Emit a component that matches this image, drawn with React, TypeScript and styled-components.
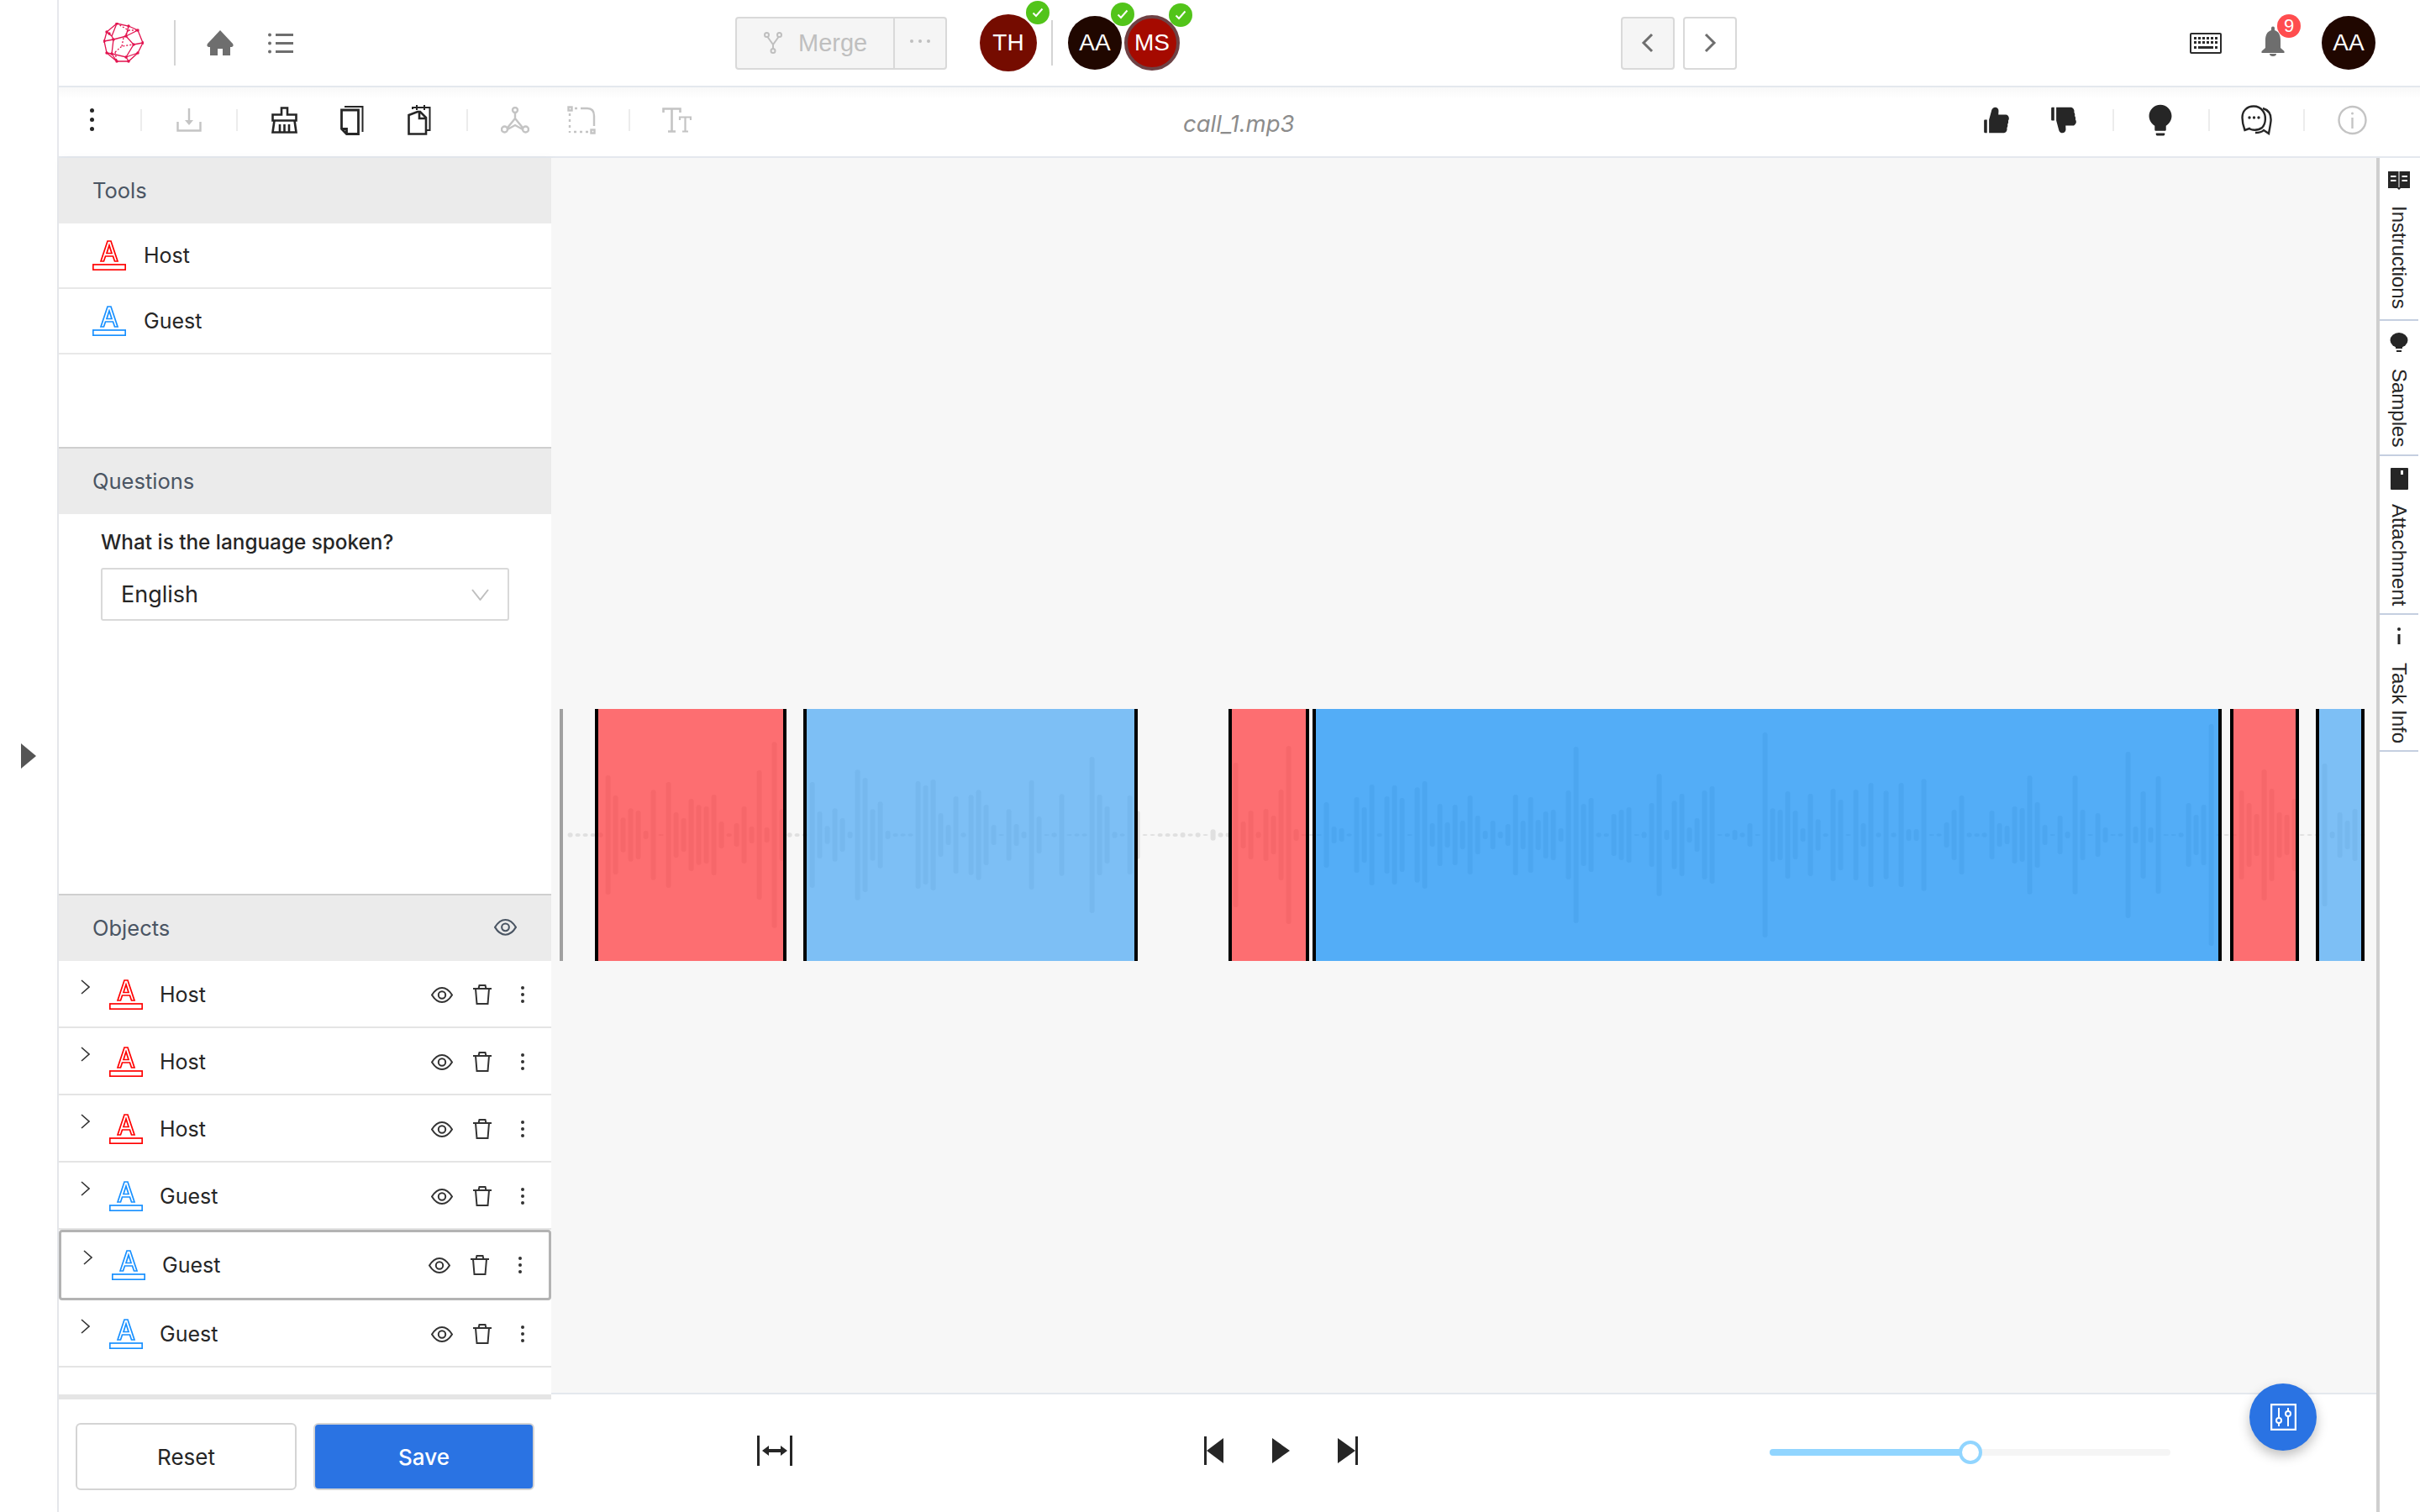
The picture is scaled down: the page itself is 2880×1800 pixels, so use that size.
import React from "react";
import styled, { createGlobalStyle } from "styled-components";
import { AiFillBulb, AiFillDislike, AiFillLike } from "react-icons/ai";

const GlobalStyle = createGlobalStyle`
  html, body { margin: 0; padding: 0; background: #fff; }
  body { font-family: "Inter", "Liberation Sans", sans-serif; color: #262626; }
  * { box-sizing: border-box; }
`;

const Page = styled.div`
  display: flex;
  width: 2880px;
  height: 1800px;
  overflow: hidden;
`;
const Rail = styled.div`
  width: 70px;
  flex: none;
  display: flex;
  align-items: center;
  padding: 0 0 0 25px;
  border-right: 2px solid #e6e8ec;
`;
const RailArrow = styled.div`
  width: 0;
  height: 0;
  border-left: 18px solid #555;
  border-top: 15px solid transparent;
  border-bottom: 15px solid transparent;
`;
const Main = styled.div`
  flex: 1;
  display: flex;
  flex-direction: column;
  min-width: 0;
`;
const TopBar = styled.header`
  height: 104px;
  flex: none;
  display: flex;
  align-items: center;
  padding-left: 53px;
  border-bottom: 2px solid #e4e8ee;
`;
const ToolBar = styled.div`
  height: 84px;
  flex: none;
  display: flex;
  align-items: center;
  padding: 0 0 5px 36px;
  border-bottom: 2px solid #e4e8ee;
  background: linear-gradient(#f8f8f8, #fff 14px);
`;
const Slot = styled.div<{ $ml?: number }>`
  flex: none;
  display: flex;
  align-items: center;
  justify-content: center;
  margin-left: ${p => p.$ml ?? 0}px;
`;
const BarRule = styled.div<{ $ml: number }>`
  width: 2px;
  height: 54px;
  flex: none;
  background: #d4d4d4;
  margin-left: ${p => p.$ml}px;
`;
const ToolRule = styled.div<{ $ml: number }>`
  width: 2px;
  height: 26px;
  flex: none;
  background: #ececec;
  margin-left: ${p => p.$ml}px;
`;
const MergeGroup = styled.div`
  width: 252px;
  height: 63px;
  flex: none;
  margin-left: 526px;
  display: flex;
  background: #f5f5f5;
  border: 2px solid #d9d9d9;
  border-radius: 4px;
  color: #bfbfbf;
`;
const MergeMain = styled.div`
  width: 188px;
  display: flex;
  align-items: center;
  gap: 19px;
  padding-left: 32px;
  font-size: 29px;
  font-family: "Liberation Sans", sans-serif;
  border-right: 2px solid #d9d9d9;
`;
const MergeMore = styled.div`
  flex: 1;
  display: flex;
  align-items: center;
  justify-content: center;
  padding-bottom: 4px;
  gap: 6px;
`;
const Dot = styled.i`
  width: 4px;
  height: 4px;
  border-radius: 50%;
  background: #bfbfbf;
`;
const Avatar = styled.div<{ $bg: string; $size: number; $ml: number; $ring?: boolean }>`
  position: relative;
  width: ${p => p.$size}px;
  height: ${p => p.$size}px;
  flex: none;
  margin-left: ${p => p.$ml}px;
  border-radius: 50%;
  background: ${p => p.$bg};
  border: ${p => (p.$ring ? "4px solid #6e4245" : "none")};
  color: #fff;
  font-size: 28px;
  font-family: "Liberation Sans", sans-serif;
  display: flex;
  align-items: center;
  justify-content: center;
`;
const Check = styled.span<{ $ring?: boolean }>`
  position: absolute;
  top: ${p => (p.$ring ? -18 : -16)}px;
  right: ${p => (p.$ring ? -19 : -15)}px;
  width: 28px;
  height: 28px;
  border-radius: 50%;
  background: #52c41a;
  display: flex;
  align-items: center;
  justify-content: center;
`;
const NavButton = styled.button<{ $off?: boolean; $ml: number }>`
  width: 64px;
  height: 63px;
  flex: none;
  padding: 0;
  margin-left: ${p => p.$ml}px;
  background: ${p => (p.$off ? "#f5f5f5" : "#fff")};
  border: 2px solid #d9d9d9;
  border-radius: 4px;
  display: flex;
  align-items: center;
  justify-content: center;
`;
const Count = styled.span`
  position: absolute;
  top: -14px;
  right: -19px;
  width: 28px;
  height: 28px;
  border-radius: 50%;
  background: #ff4d4f;
  color: #fff;
  font-size: 22px;
  font-family: "Liberation Sans", sans-serif;
  display: flex;
  align-items: center;
  justify-content: center;
`;
const BellBox = styled.div`
  position: relative;
  width: 28px;
  height: 36px;
  flex: none;
  margin-left: 47px;
  margin-top: -4px;
  display: flex;
`;
const FileName = styled.div`
  margin-left: 585px;
  width: 160px;
  flex: none;
  font-size: 27.5px;
  font-style: italic;
  color: #8c8c8c;
  padding-top: 9px;
`;
const RightTools = styled.div`
  margin-left: auto;
  padding-right: 63px;
  display: flex;
  align-items: center;
`;
const Body = styled.div`
  flex: 1;
  display: flex;
  min-height: 0;
`;
const Panel = styled.aside`
  width: 586px;
  flex: none;
  display: flex;
  flex-direction: column;
  background: #fff;
  box-shadow: 2px 0 10px rgba(0, 0, 0, 0.03);
  position: relative;
`;
const Section = styled.section<{ $h: number; $rule?: boolean }>`
  height: ${p => p.$h}px;
  flex: none;
  border-top: ${p => (p.$rule ? "2px solid #cfcfcf" : "none")};
`;
const SectionHead = styled.div<{ $h: number }>`
  height: ${p => p.$h}px;
  padding: 0 41px 2px 40px;
  background: #ebebeb;
  display: flex;
  align-items: center;
  justify-content: space-between;
  font-size: 25.5px;
  color: #4a5563;
`;
const ToolRow = styled.div`
  height: 78px;
  display: flex;
  align-items: center;
  gap: 21px;
  padding-left: 40px;
  font-size: 25px;
  border-bottom: 2px solid #e8e8e8;
`;
const Question = styled.div`
  padding: 19px 50px 0 50px;
`;
const QuestionLabel = styled.div`
  font-size: 24.3px;
  font-weight: 500;
  line-height: 28px;
`;
const Select = styled.div`
  height: 63px;
  margin-top: 17px;
  padding: 0 22px 0 22px;
  border: 2px solid #d9d9d9;
  border-radius: 3px;
  display: flex;
  align-items: center;
  justify-content: space-between;
  font-size: 27px;
`;
const ObjectRow = styled.div<{ $active?: boolean }>`
  height: ${p => (p.$active ? 84 : 80)}px;
  display: flex;
  align-items: center;
  padding: ${p => (p.$active ? 0 : 2)}px 31px 0 26px;
  font-size: 25px;
  border: ${p => (p.$active ? "3px solid #b3b3b3" : "none")};
  border-bottom: ${p => (p.$active ? "3px solid #b3b3b3" : "2px solid #e4e4e4")};
  border-radius: ${p => (p.$active ? 4 : 0)}px;
  background: #fff;
`;
const RowCaret = styled.div`
  width: 11px;
  flex: none;
  display: flex;
  margin-bottom: 18px;
`;
const RowName = styled.span`
  margin-left: 20px;
`;
const RowActions = styled.div`
  margin-left: auto;
  display: flex;
  align-items: center;
`;
const Kebab = styled.div<{ $ml?: number; $color?: string }>`
  width: 6px;
  flex: none;
  margin-left: ${p => p.$ml ?? 0}px;
  display: flex;
  flex-direction: column;
  align-items: center;
  gap: ${p => (p.$color ? 6 : 4)}px;
  i {
    width: ${p => (p.$color ? 5 : 4)}px;
    height: ${p => (p.$color ? 5 : 4)}px;
    border-radius: 50%;
    background: ${p => p.$color ?? "#333"};
  }
`;
const Footer = styled.div`
  flex: 1;
  display: flex;
  gap: 20px;
  padding: 28px 20px 0;
  border-top: 6px solid #e5e5e5;
  margin-top: auto;
`;
const FooterButton = styled.button<{ $primary?: boolean }>`
  width: 263px;
  height: 80px;
  border-radius: 6px;
  border: 2px solid #d4d4d4;
  background: ${p => (p.$primary ? "#2a73e3" : "#fff")};
  color: ${p => (p.$primary ? "#fff" : "#262626")};
  font: ${p => (p.$primary ? 500 : 400)} 26px "Inter", sans-serif;
`;
const Stage = styled.main`
  flex: 1;
  display: flex;
  flex-direction: column;
  position: relative;
  min-width: 0;
`;
const Canvas = styled.div`
  flex: 1;
  background: #f7f7f7;
  padding-top: 656px;
`;
const Track = styled.div`
  position: relative;
  height: 300px;
`;
const Wave = styled.svg`
  position: absolute;
  inset: 0;
`;
const Cursor = styled.div`
  position: absolute;
  left: 10px;
  top: 0;
  width: 4px;
  height: 100%;
  background: #a0a0a0;
`;
const Segment = styled.div<{ $tint: string }>`
  position: absolute;
  top: 0;
  height: 100%;
  background: ${p => p.$tint};
  background-clip: padding-box;
  border-left: 4px solid #000;
  border-right: 4px solid #000;
`;
const Transport = styled.div`
  height: 142px;
  flex: none;
  display: flex;
  align-items: center;
  background: #fff;
  border-top: 2px solid #e4e8ee;
  padding: 0 0 6px 245px;
`;
const Slider = styled.div`
  position: relative;
  width: 477px;
  height: 8px;
  flex: none;
  margin-left: 490px;
  margin-top: 4px;
  border-radius: 4px;
  background: #f5f5f5;
`;
const SliderFill = styled.div`
  height: 100%;
  border-radius: 4px;
  background: #91d5ff;
`;
const SliderThumb = styled.div`
  position: absolute;
  top: -10px;
  width: 28px;
  height: 28px;
  margin-left: -14px;
  border-radius: 50%;
  background: #fff;
  border: 4px solid #91d5ff;
`;
const Fab = styled.button`
  position: absolute;
  right: 71px;
  bottom: 73px;
  width: 80px;
  height: 80px;
  padding: 0;
  border: none;
  border-radius: 50%;
  background: #2a73e3;
  box-shadow: 0 6px 14px rgba(0, 0, 0, 0.25);
  display: flex;
  align-items: center;
  justify-content: center;
`;
const SideTabs = styled.nav`
  width: 52px;
  flex: none;
  padding-right: 2px;
  border-left: 4px solid #cfcfcf;
  background: #fff;
`;
const SideTab = styled.div<{ $h: number; $pad: number }>`
  height: ${p => p.$h}px;
  padding-top: ${p => p.$pad}px;
  display: flex;
  flex-direction: column;
  align-items: center;
  border-bottom: 2px solid #c5cfe0;
`;
const SideLabel = styled.span<{ $mt: number }>`
  writing-mode: vertical-rl;
  margin-top: ${p => p.$mt}px;
  font: 24px "Liberation Sans", sans-serif;
  line-height: 24px;
`;

// half heights of the audio bars, 9px apart, in thirds of a pixel
const BARS = [
  8, 6, 6, 6, 8, 213, 141, 62, 95, 87, 15, 161, 2, 189, 81, 60, 129, 107, 102, 144, 48, 6, 42, 102, 30, 231, 27, 332,
  92, 8, 6, 6, 189, 84, 32, 95, 60, 12, 233, 204, 92, 119, 15, 6, 5, 5, 192, 177, 198, 78, 36, 138, 8, 143, 161, 108,
  36, 2, 92, 39, 12, 195, 66, 2, 8, 146, 2, 5, 5, 279, 144, 102, 11, 5, 141, 86, 2, 2, 6, 6, 6, 9, 5, 8, 2, 20, 8, 8,
  258, 48, 87, 11, 93, 69, 162, 318, 21, 2, 2, 2, 117, 30, 24, 5, 135, 99, 180, 6, 138, 177, 132, 2, 170, 192, 42, 111,
  45, 108, 51, 141, 69, 15, 51, 12, 39, 144, 51, 135, 54, 84, 90, 24, 159, 315, 111, 132, 8, 6, 75, 90, 99, 2, 11, 114,
  218, 18, 122, 147, 27, 60, 159, 174, 2, 6, 18, 8, 42, 2, 366, 95, 90, 156, 87, 24, 147, 56, 6, 165, 126, 2, 162, 42,
  186, 8, 158, 8, 186, 21, 21, 200, 2, 5, 45, 90, 141, 8, 6, 8, 87, 42, 33, 102, 96, 212, 117, 36, 2, 69, 12, 212, 90,
  2, 78, 27, 2, 5, 297, 30, 156, 27, 210, 2, 2, 8, 114, 72, 108, 396, 2, 2, 2, 159, 114, 75, 234, 165, 81, 72, 129, 2,
  2, 2, 255, 12, 81, 51, 93, 2,
];

const RED = "rgba(255, 51, 56, 0.7)";
const SKY = "rgba(73, 167, 244, 0.7)";
const BLUE = "rgba(13, 141, 246, 0.7)";

const SEGMENTS = [
  { left: 52, width: 228, tint: RED },
  { left: 300, width: 398, tint: SKY },
  { left: 806, width: 96, tint: RED },
  { left: 906, width: 1082, tint: BLUE },
  { left: 1998, width: 82, tint: RED },
  { left: 2100, width: 58, tint: SKY },
];

const OBJECTS = [
  { name: "Host", color: "#ff0000" },
  { name: "Host", color: "#ff0000" },
  { name: "Host", color: "#ff0000" },
  { name: "Guest", color: "#1890ff" },
  { name: "Guest", color: "#1890ff", active: true },
  { name: "Guest", color: "#1890ff" },
];

const Logo = () => {
  const outer = "16,1 30,4 41,9 47,24 41,36 30,46 16,46 4,36 1,22 4,11";
  const inner = [[12, 20], [27, 16], [36, 26], [27, 41], [10, 37]];
  const nodes = [
    [16, 1], [30, 4], [41, 9], [47, 24], [41, 36], [30, 46], [16, 46], [4, 36], [1, 22], [4, 11],
    [12, 20], [27, 16], [36, 26], [27, 41], [10, 37], [7, 13],
  ];
  return (
    <svg width="48" height="48" viewBox="0 0 48 48" fill="none" stroke="#e2134f" strokeWidth="1.3">
      <polygon points={outer} />
      <polygon points={inner.map(p => p.join(",")).join(" ")} />
      <path d="M4 11 L10 16 L12 20 M10 16 L16 1 M27 16 L30 4 M27 16 L41 9 M36 26 L47 24 M27 41 L30 46 M27 41 L41 36 M10 37 L16 46 M10 37 L4 36 M12 20 L1 22" />
      <path d="M16 1 L30 9 L41 9 M30 9 L24 18 M14 35 L22 28 L36 26 M22 28 L24 18 M14 35 L16 46" strokeDasharray="2 2" />
      {nodes.map(([x, y], i) => (
        <circle key={i} cx={x} cy={y} r="1.7" fill="#e2134f" stroke="none" />
      ))}
    </svg>
  );
};

const HomeIcon = () => (
  <svg width="32" height="30" viewBox="0 0 32 30" fill="#6e6e6e">
    <path d="M16 0 L31 16 Q33 20 28 20 V30 H19 V22 H13 V30 H4 V20 Q-1 20 1 16z" />
  </svg>
);

const BellIcon = () => (
  <svg width="28" height="36" viewBox="0 0 28 36" fill="#6e6e6e">
    <path d="M12 2.5 a2 2 0 0 1 4 0 V5 C21 6.5 23 11 23 17 V26 L27.5 30 V32 H0.5 V30 L5 26 V17 C5 11 7 6.5 12 5z" />
    <path d="M10 33 H18 A4 3 0 0 1 10 33z" />
  </svg>
);

const ListIcon = () => (
  <svg width="30" height="25" viewBox="0 0 30 25" fill="#6e6e6e">
    <circle cx="2" cy="2.5" r="2" />
    <circle cx="2" cy="12.5" r="2" />
    <circle cx="2" cy="22.5" r="2" />
    <rect x="9" y="1" width="21" height="3" />
    <rect x="9" y="11" width="21" height="3" />
    <rect x="9" y="21" width="21" height="3" />
  </svg>
);

const MergeIcon = () => (
  <svg width="22" height="26" viewBox="0 0 22 26" fill="none" stroke="#bfbfbf" strokeWidth="2">
    <circle cx="3.5" cy="3.5" r="2.5" />
    <circle cx="18.5" cy="3.5" r="2.5" />
    <circle cx="11" cy="22.5" r="2.5" />
    <path d="M4.5 6 L11 15 L17.5 6 M11 15 V20" />
  </svg>
);

const CheckMark = () => (
  <svg width="14" height="12" viewBox="0 0 14 12" fill="none" stroke="#fff" strokeWidth="2">
    <path d="M1.5 6.5 L5 10 L12.5 1.5" />
  </svg>
);

const Chevron = ({ dir }: { dir: "left" | "right" }) => (
  <svg width="16" height="24" viewBox="0 0 16 24" fill="none" stroke="#6e6e6e" strokeWidth="3">
    <path d={dir === "left" ? "M13 2 L3 12 L13 22" : "M3 2 L13 12 L3 22"} />
  </svg>
);

const KeyboardIcon = () => (
  <svg width="38" height="25" viewBox="0 0 38 25">
    <rect width="38" height="25" rx="2" fill="#2b2b2b" />
    <rect x="2" y="2" width="34" height="21" fill="#fff" />
    <path
      d="M5 5h3v3H5zM10 5h3v3h-3zM15 5h3v3h-3zM20 5h3v3h-3zM25 5h3v3h-3zM30 5h3v3h-3zM5 10h3v3H5zM10 10h3v3h-3zM15 10h3v3h-3zM20 10h3v3h-3zM25 10h3v3h-3zM30 10h3v3h-3zM5 16h3v3H5zM10 16h18v3H10zM30 16h3v3h-3z"
      fill="#2b2b2b"
    />
  </svg>
);

const DownloadIcon = () => (
  <svg width="30" height="28" viewBox="0 0 30 28" fill="none" stroke="#c4c4c4" strokeWidth="2.4">
    <path d="M15 0 V17 M1.5 16 V26.5 H28.5 V16" />
    <path d="M10 14 H20 L15 20z" fill="#c4c4c4" stroke="none" />
  </svg>
);

const BrushIcon = () => (
  <svg width="31" height="32" viewBox="0 0 31 32" fill="none" stroke="#262626" strokeWidth="2.6">
    <path d="M12 1.5 H19 V9.5 H29.5 V16.5 H1.5 V9.5 H12z" />
    <path d="M3.5 16.5 L1.5 30.5 H29.5 L27.5 16.5 M10 21 V30 M15.5 21 V30 M21 21 V30" />
  </svg>
);

const CopyIcon = () => (
  <svg width="28" height="36" viewBox="0 0 28 36" fill="none" stroke="#262626" strokeWidth="2.8">
    <path d="M5 2 H26.5 V32" strokeWidth="2" />
    <path d="M1.5 6 H21.5 V34.5 H7.5 L1.5 28.5z M1.5 28.5 H7.5 V34.5" />
  </svg>
);

const PasteIcon = () => (
  <svg width="28" height="36" viewBox="0 0 28 36" fill="none" stroke="#262626" strokeWidth="2.6">
    <path d="M6 5 V3 H26.5 V30 H23 M11 0 V6 M20 0 V6" strokeWidth="2" />
    <path d="M1.5 12 L12 8 H15 L22 15 V34.5 H1.5z M14 8 V16 H22" />
  </svg>
);

const NodesIcon = () => (
  <svg width="34" height="32" viewBox="0 0 34 32" fill="none" stroke="#c4c4c4" strokeWidth="2.4">
    <circle cx="17" cy="4" r="3" />
    <circle cx="4.5" cy="27" r="3.5" />
    <circle cx="29.5" cy="27" r="3.5" />
    <path d="M17 7 V14 M17 14 L8 25 M17 14 L26 25 M8 27 L17 22 L26 27" />
  </svg>
);

const ShapeIcon = () => (
  <svg width="34" height="34" viewBox="0 0 34 34" fill="none" stroke="#c4c4c4" strokeWidth="2.4">
    <rect x="1.5" y="1.5" width="4" height="4" />
    <rect x="28.5" y="28.5" width="4" height="4" />
    <path d="M9 3 H12 M16 3 H24 Q32 3 32 12 V24 M3 9 V12 M3 16 V19 M3 23 V26 M3 30 V32 M8 31 H11 M15 31 H18 M22 31 H25" />
  </svg>
);

const TextSizeIcon = () => (
  <svg width="35" height="30" viewBox="0 0 35 30" fill="none" stroke="#c4c4c4" strokeWidth="2.6">
    <path d="M1.5 6 V1.5 H21.5 V6 M11.5 1.5 V28.5 M7 28.5 H16" />
    <path d="M21 15 V11.5 H34 V15 M27.5 11.5 V28.5 M24 28.5 H31" strokeWidth="2.2" />
  </svg>
);

const ChatIcon = () => (
  <svg width="37" height="36" viewBox="0 0 37 36" fill="none" stroke="#262626" strokeWidth="2.4">
    <path d="M26 4 C33 6 36 12 35.5 19 C35 24 34 28 33 34 L27 30 C24 33 20 33 17 33" />
    <path d="M15 1.5 C7 1.5 1.5 7 1.5 15 C1.5 21 3 26 4.5 30 L10 28 C12 30 20 31 25 27 C30 22 30 12 26 7 C23 3 19 1.5 15 1.5z" />
    <circle cx="10" cy="15" r="1.7" fill="#262626" stroke="none" />
    <circle cx="15.5" cy="15" r="1.7" fill="#262626" stroke="none" />
    <circle cx="21" cy="15" r="1.7" fill="#262626" stroke="none" />
  </svg>
);

const InfoIcon = () => (
  <svg width="35" height="36" viewBox="0 0 35 36" fill="none" stroke="#c4c4c4" strokeWidth="2.4">
    <circle cx="17.5" cy="18" r="16" />
    <path d="M17.5 15 V28" />
    <circle cx="17.5" cy="10" r="1.5" fill="#c4c4c4" stroke="none" />
  </svg>
);

const LabelIcon = ({ color }: { color: string }) => (
  <svg width="40" height="36" viewBox="0 0 40 36" fill="none" stroke={color} strokeWidth="1.7">
    <path d="M10 25 L18 1 H22 L30 25 H26.5 L24.5 19 H15.5 L13.5 25z" />
    <path d="M17 15.5 H23 L20 6z" />
    <rect x="0.8" y="29" width="38.4" height="6.2" />
  </svg>
);

const RowCaretIcon = () => (
  <svg width="11" height="18" viewBox="0 0 11 18" fill="none" stroke="#333" strokeWidth="1.6">
    <path d="M1 1 L10 9 L1 17" />
  </svg>
);

const EyeIcon = ({ color = "#333", w = 26 }: { color?: string; w?: number }) => (
  <svg width={w} height={(w * 19) / 26} viewBox="0 0 26 19" fill="none" stroke={color} strokeWidth="2">
    <path d="M1 9.5 C5 3 9 1 13 1 C17 1 21 3 25 9.5 C21 16 17 18 13 18 C9 18 5 16 1 9.5z" />
    <circle cx="13" cy="9.5" r="4.2" />
  </svg>
);

const TrashIcon = () => (
  <svg width="22" height="24" viewBox="0 0 22 24" fill="none" stroke="#333" strokeWidth="2">
    <path d="M0 5 H22 M3 5 L4.5 23 H17.5 L19 5 M6.5 5 L7.5 1 H14.5 L15.5 5" />
  </svg>
);

const SelectCaret = () => (
  <svg width="21" height="14" viewBox="0 0 21 14" fill="none" stroke="#bfbfbf" strokeWidth="2">
    <path d="M1 1 L10.5 13 L20 1" />
  </svg>
);

const FitIcon = () => (
  <svg width="42" height="36" viewBox="0 0 42 36" fill="#262626">
    <rect x="0" y="0" width="3" height="36" />
    <rect x="39" y="0" width="3" height="36" />
    <path d="M6 18 L14 12 V16 H28 V12 L36 18 L28 24 V20 H14 V24z" />
  </svg>
);

const PrevIcon = () => (
  <svg width="23" height="34" viewBox="0 0 23 34" fill="#262626">
    <rect width="3" height="34" />
    <path d="M23 2 V32 L3 17z" />
  </svg>
);

const PlayIcon = () => (
  <svg width="21" height="30" viewBox="0 0 21 30" fill="#262626">
    <path d="M0 0 L21 15 L0 30z" />
  </svg>
);

const NextIcon = () => (
  <svg width="24" height="34" viewBox="0 0 24 34" fill="#262626">
    <rect x="21" width="3" height="34" />
    <path d="M0 2 V32 L21 17z" />
  </svg>
);

const MixerIcon = () => (
  <svg width="31" height="32" viewBox="0 0 31 32" fill="none" stroke="#fff" strokeWidth="2">
    <rect x="1" y="1" width="29" height="30" strokeWidth="2.5" />
    <path d="M10 5 V27 M21 5 V27" />
    <circle cx="10" cy="20" r="3" fill="#2a73e3" />
    <circle cx="21" cy="12" r="3" fill="#2a73e3" />
  </svg>
);

const BookIcon = () => (
  <svg width="26" height="22" viewBox="0 0 26 22">
    <path d="M0 0 H12.5 V20 H0z M13.5 0 H26 V20 H13.5z M10 19 H16 L13 22z" fill="#262626" />
    <path d="M3 6 H9.5 M3 11 H9.5 M16.5 6 H23 M16.5 11 H23" stroke="#fff" strokeWidth="2" />
  </svg>
);

const SmallBulb = () => (
  <svg width="22" height="24" viewBox="0 0 22 24" fill="#262626">
    <ellipse cx="11" cy="9" rx="10.5" ry="9" />
    <rect x="7" y="15" width="8" height="4" />
    <rect x="8" y="21" width="6" height="2" />
  </svg>
);

const AttachIcon = () => (
  <svg width="21" height="26" viewBox="0 0 21 26">
    <rect width="21" height="26" rx="1" fill="#262626" />
    <rect x="12" y="3" width="3" height="5" fill="#fff" />
  </svg>
);

const TaskInfoIcon = () => (
  <svg width="6" height="20" viewBox="0 0 6 20" fill="#262626">
    <circle cx="3" cy="2" r="2" />
    <rect x="1.5" y="8" width="3" height="12" />
  </svg>
);

function App() {
  return (
    <Page>
      <GlobalStyle />
      <Rail>
        <RailArrow />
      </Rail>
      <Main>
        <TopBar>
          <Slot><Logo /></Slot>
          <BarRule $ml={36} />
          <Slot $ml={37}><HomeIcon /></Slot>
          <Slot $ml={41}><ListIcon /></Slot>
          <MergeGroup>
            <MergeMain><MergeIcon />Merge</MergeMain>
            <MergeMore><Dot /><Dot /><Dot /></MergeMore>
          </MergeGroup>
          <Avatar $bg="#750c00" $size={68} $ml={39}>TH<Check><CheckMark /></Check></Avatar>
          <BarRule $ml={17} />
          <Avatar $bg="#200700" $size={64} $ml={18}>AA<Check><CheckMark /></Check></Avatar>
          <Avatar $bg="#a50a00" $size={66} $ml={3} $ring>MS<Check $ring><CheckMark /></Check></Avatar>
          <NavButton $off $ml={525}><Chevron dir="left" /></NavButton>
          <NavButton $ml={10}><Chevron dir="right" /></NavButton>
          <Slot $ml={539}><KeyboardIcon /></Slot>
          <BellBox>
            <BellIcon />
            <Count>9</Count>
          </BellBox>
          <Avatar $bg="#200700" $size={64} $ml={44}>AA</Avatar>
        </TopBar>
        <ToolBar>
          <Kebab $color="#262626"><i /><i /><i /></Kebab>
          <ToolRule $ml={55} />
          <Slot $ml={41}><DownloadIcon /></Slot>
          <ToolRule $ml={41} />
          <Slot $ml={40}><BrushIcon /></Slot>
          <Slot $ml={51}><CopyIcon /></Slot>
          <Slot $ml={52}><PasteIcon /></Slot>
          <ToolRule $ml={42} />
          <Slot $ml={39}><NodesIcon /></Slot>
          <Slot $ml={45}><ShapeIcon /></Slot>
          <ToolRule $ml={39} />
          <Slot $ml={38}><TextSizeIcon /></Slot>
          <FileName>call_1.mp3</FileName>
          <RightTools>
            <Slot><AiFillLike size={38} color="#262626" /></Slot>
            <Slot $ml={42}><AiFillDislike size={38} color="#262626" /></Slot>
            <ToolRule $ml={39} />
            <Slot $ml={34}><AiFillBulb size={42} color="#262626" /></Slot>
            <ToolRule $ml={36} />
            <Slot $ml={37}><ChatIcon /></Slot>
            <ToolRule $ml={37} />
            <Slot $ml={39}><InfoIcon /></Slot>
          </RightTools>
        </ToolBar>
        <Body>
          <Panel>
            <Section $h={344}>
              <SectionHead $h={78}>Tools</SectionHead>
              <ToolRow><LabelIcon color="#ff0000" />Host</ToolRow>
              <ToolRow><LabelIcon color="#1890ff" />Guest</ToolRow>
            </Section>
            <Section $h={532} $rule>
              <SectionHead $h={78}>Questions</SectionHead>
              <Question>
                <QuestionLabel>What is the language spoken?</QuestionLabel>
                <Select>English<SelectCaret /></Select>
              </Question>
            </Section>
            <Section $h={596} $rule>
              <SectionHead $h={78}>
                Objects
                <EyeIcon color="#4a5563" w={27} />
              </SectionHead>
              {OBJECTS.map((o, i) => (
                <ObjectRow key={i} $active={o.active}>
                  <RowCaret><RowCaretIcon /></RowCaret>
                  <Slot $ml={23}><LabelIcon color={o.color} /></Slot>
                  <RowName>{o.name}</RowName>
                  <RowActions>
                    <EyeIcon />
                    <Slot $ml={24}><TrashIcon /></Slot>
                    <Kebab $ml={34}><i /><i /><i /></Kebab>
                  </RowActions>
                </ObjectRow>
              ))}
            </Section>
            <Footer>
              <FooterButton>Reset</FooterButton>
              <FooterButton $primary>Save</FooterButton>
            </Footer>
          </Panel>
          <Stage>
            <Canvas>
              <Track>
                <Wave width="2172" height="300" viewBox="0 0 2172 300" fill="#e0e0e0">
                  {BARS.map((h, k) => {
                    const half = Math.max(h / 3, 1);
                    return <rect key={k} x={19.6 + 9 * k} y={150 - half} width="6" height={half * 2} rx="3" />;
                  })}
                </Wave>
                <Cursor />
                {SEGMENTS.map((s, i) => (
                  <Segment key={i} $tint={s.tint} style={{ left: s.left, width: s.width }} />
                ))}
              </Track>
            </Canvas>
            <Transport>
              <Slot><FitIcon /></Slot>
              <Slot $ml={490}><PrevIcon /></Slot>
              <Slot $ml={58}><PlayIcon /></Slot>
              <Slot $ml={57}><NextIcon /></Slot>
              <Slider>
                <SliderFill style={{ width: "50%" }} />
                <SliderThumb style={{ left: "50%" }} />
              </Slider>
            </Transport>
            <Fab><MixerIcon /></Fab>
          </Stage>
          <SideTabs>
            <SideTab $h={194} $pad={16}><BookIcon /><SideLabel $mt={19}>Instructions</SideLabel></SideTab>
            <SideTab $h={161} $pad={14}><SmallBulb /><SideLabel $mt={19}>Samples</SideLabel></SideTab>
            <SideTab $h={189} $pad={14}><AttachIcon /><SideLabel $mt={17}>Attachment</SideLabel></SideTab>
            <SideTab $h={163} $pad={15}><TaskInfoIcon /><SideLabel $mt={22}>Task Info</SideLabel></SideTab>
          </SideTabs>
        </Body>
      </Main>
    </Page>
  );
}

export default App;
